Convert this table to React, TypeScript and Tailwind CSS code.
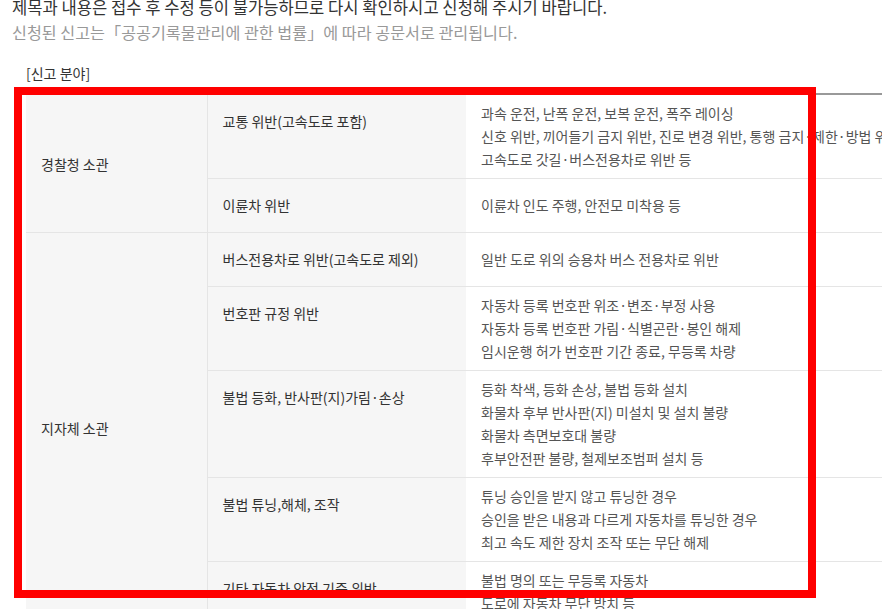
import React from "react";

type Row = { sub: string; items: string[] };
type Group = { name: string; rows: Row[] };

const groups: Group[] = [
  {
    name: "경찰청 소관",
    rows: [
      {
        sub: "교통 위반(고속도로 포함)",
        items: [
          "과속 운전, 난폭 운전, 보복 운전, 폭주 레이싱",
          "신호 위반, 끼어들기 금지 위반, 진로 변경 위반, 통행 금지·제한·방법 위반, 앞지르기 위반",
          "고속도로 갓길·버스전용차로 위반 등",
        ],
      },
      { sub: "이륜차 위반", items: ["이륜차 인도 주행, 안전모 미착용 등"] },
    ],
  },
  {
    name: "지자체 소관",
    rows: [
      { sub: "버스전용차로 위반(고속도로 제외)", items: ["일반 도로 위의 승용차 버스 전용차로 위반"] },
      {
        sub: "번호판 규정 위반",
        items: [
          "자동차 등록 번호판 위조·변조·부정 사용",
          "자동차 등록 번호판 가림·식별곤란·봉인 해제",
          "임시운행 허가 번호판 기간 종료, 무등록 차량",
        ],
      },
      {
        sub: "불법 등화, 반사판(지)가림·손상",
        items: [
          "등화 착색, 등화 손상, 불법 등화 설치",
          "화물차 후부 반사판(지) 미설치 및 설치 불량",
          "화물차 측면보호대 불량",
          "후부안전판 불량, 철제보조범퍼 설치 등",
        ],
      },
      {
        sub: "불법 튜닝,해체, 조작",
        items: [
          "튜닝 승인을 받지 않고 튜닝한 경우",
          "승인을 받은 내용과 다르게 자동차를 튜닝한 경우",
          "최고 속도 제한 장치 조작 또는 무단 해제",
        ],
      },
      {
        sub: "기타 자동차 안전 기준 위반",
        items: ["불법 명의 또는 무등록 자동차", "도로에 자동차 무단 방치 등"],
      },
    ],
  },
];

export default function App() {
  return (
    <div
      className="relative w-[882px] h-[609px] overflow-hidden bg-white"
      style={{ fontFamily: '"Noto Sans CJK KR", "Noto Sans", sans-serif' }}
    >
      <div className="pl-[12px] mt-[-5px]">
        <p className="text-[16.6px] leading-[25px] text-[#333] whitespace-nowrap">
          제목과 내용은 접수 후 수정 등이 불가능하므로 다시 확인하시고 신청해 주시기 바랍니다.
        </p>
        <p className="text-[16.2px] leading-[25px] text-[#999] whitespace-nowrap">
          신청된 신고는「공공기록물관리에 관한 법률」에 따라 공문서로 관리됩니다.
        </p>
      </div>
      <div className="pl-[26px] mt-[18px]">
        <p className="text-[14px] leading-[20px] text-[#333]">[신고 분야]</p>
        <table className="mt-[10px] w-[1000px] border-collapse border-t-2 border-t-[#999] table-fixed">
          <colgroup>
            <col className="w-[181px]" />
            <col className="w-[259px]" />
            <col />
          </colgroup>
          <tbody>
            {groups.map((g) =>
              g.rows.map((r, i) => (
                <tr key={g.name + r.sub}>
                  {i === 0 && (
                    <td
                      rowSpan={g.rows.length}
                      className="bg-[#f6f6f6] border-r border-b border-[#e5e5e5] px-[15px] align-middle text-[14px] leading-[22px] text-[#333]"
                    >
                      {g.name}
                    </td>
                  )}
                  <td className="bg-[#f6f6f6] border-b border-[#e5e5e5] px-[15px] pt-[15px] pb-[16px] align-top text-[14px] leading-[22px] text-[#333] whitespace-nowrap">
                    {r.sub}
                  </td>
                  <td className="bg-white border-b border-[#e5e5e5] px-[15px] py-[7px] align-middle text-[14px] leading-[23px] text-[#555] whitespace-nowrap">
                    {r.items.map((t) => (
                      <div key={t}>{t}</div>
                    ))}
                  </td>
                </tr>
              ))
            )}
          </tbody>
        </table>
      </div>
      <div className="absolute left-[14px] top-[87px] w-[802px] h-[511px] border-[8px] border-[#ff0000] pointer-events-none" />
    </div>
  );
}
